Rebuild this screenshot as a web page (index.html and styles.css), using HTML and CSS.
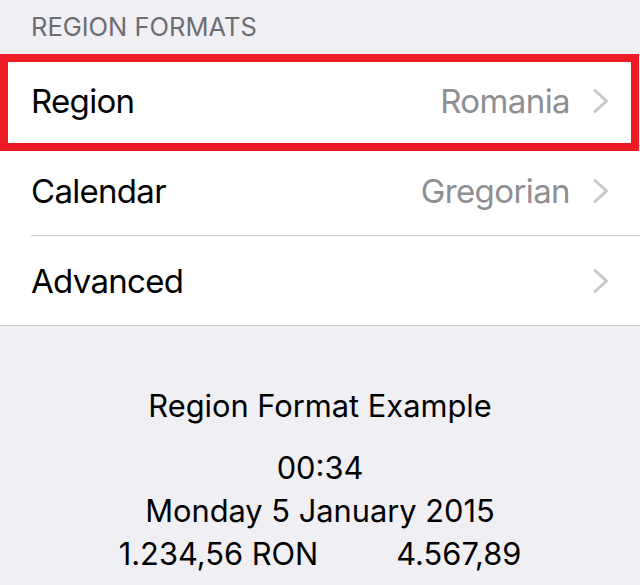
FILE: index.html
```html
<!DOCTYPE html>
<html>
<head>
<meta charset="utf-8">
<link rel="stylesheet" href="styles.css">
</head>
<body>
<div class="page">
  <div class="section-header">REGION FORMATS</div>
  <div class="group">
    <div class="row">
      <div class="row-inner">
        <span class="label">Region</span>
        <span class="value">Romania</span>
        <svg class="chevron" viewBox="0 0 18 26" width="18" height="26"><path d="M3 2.5 L14.5 13 L3 23.5"/></svg>
      </div>
    </div>
    <div class="row">
      <div class="row-inner">
        <span class="label">Calendar</span>
        <span class="value">Gregorian</span>
        <svg class="chevron" viewBox="0 0 18 26" width="18" height="26"><path d="M3 2.5 L14.5 13 L3 23.5"/></svg>
      </div>
    </div>
    <div class="row">
      <div class="row-inner last">
        <span class="label">Advanced</span>
        <svg class="chevron" viewBox="0 0 18 26" width="18" height="26"><path d="M3 2.5 L14.5 13 L3 23.5"/></svg>
      </div>
    </div>
  </div>
  <div class="example">
    <div class="example-title">Region Format Example</div>
    <div class="example-lines">
      <div>00:34</div>
      <div>Monday 5 January 2015</div>
      <div class="numbers"><span>1.234,56 RON</span><span>4.567,89</span></div>
    </div>
  </div>
  <div class="highlight"></div>
</div>
</body>
</html>
```
FILE: styles.css
```css
html, body {
  margin: 0;
  padding: 0;
}
body {
  background: #efeff4;
  font-family: Inter, "Noto Sans", sans-serif;
  width: 640px;
  height: 585px;
  overflow: hidden;
}
.page {
  position: relative;
  height: 585px;
}
.section-header {
  height: 55px;
  box-sizing: border-box;
  padding: 12px 31px 0;
  font-size: 25.5px;
  line-height: 30px;
  color: #6d6d72;
}
.group {
  background: #fff;
  border-top: 1px solid #c8c7cc;
  border-bottom: 1px solid #c8c7cc;
}
.row {
  padding-left: 31px;
}
.row-inner {
  height: 90px;
  display: flex;
  align-items: center;
  padding-right: 30px;
  border-bottom: 1px solid #c8c7cc;
  box-sizing: border-box;
}
.row-inner.last {
  border-bottom: none;
  height: 89px;
}
.label {
  flex: 1;
  font-size: 33px;
  letter-spacing: -0.7px;
  color: #000;
}
.value {
  font-size: 33px;
  letter-spacing: -0.6px;
  color: #8e8e93;
  margin-right: 22px;
}
.chevron {
  display: block;
}
.chevron path {
  fill: none;
  stroke: #c7c7cc;
  stroke-width: 3;
  stroke-linecap: round;
  stroke-linejoin: round;
}
.example {
  text-align: center;
  color: #000;
  font-size: 30.8px;
  padding-top: 62px;
}
.example-title {
  line-height: 36px;
  margin-bottom: 22px;
}
.example-lines {
  line-height: 43px;
}
.numbers {
  display: flex;
  justify-content: center;
  gap: 78px;
}
.highlight {
  position: absolute;
  left: 0;
  top: 54px;
  width: 639px;
  height: 97px;
  box-sizing: border-box;
  border: 8px solid #ed1c24;
}
```
